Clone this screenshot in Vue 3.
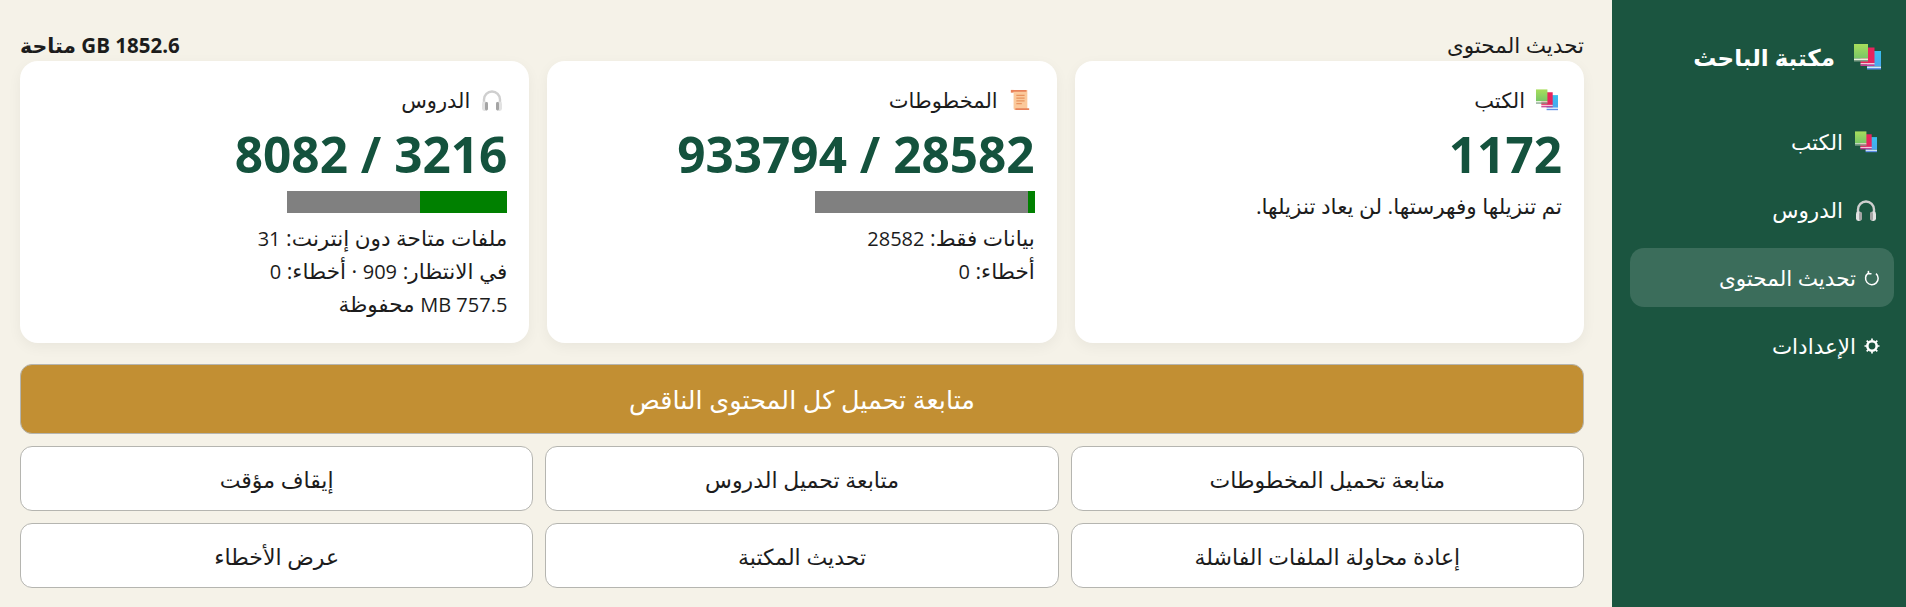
<script setup>
const rows = ['متابعة تحميل المخطوطات', 'متابعة تحميل الدروس', 'إيقاف مؤقت', 'إعادة محاولة الملفات الفاشلة', 'تحديث المكتبة', 'عرض الأخطاء']
</script>

<template>
  <div class="app" dir="rtl">
    <svg class="defs" width="0" height="0">
      <defs>
        <linearGradient id="gr" x1="0" y1="0" x2="0" y2="1"><stop offset="0" stop-color="#a8dd5c" /><stop offset="1" stop-color="#78c766" /></linearGradient>
        <linearGradient id="bl" x1="0" y1="0" x2="0" y2="1"><stop offset="0" stop-color="#38c0ee" /><stop offset="1" stop-color="#4aa5ef" /></linearGradient>
        <g id="books">
          <rect x="13" y="7" width="14" height="15.500" fill="url(#bl)" />
          <rect x="13" y="22.500" width="14" height="1.500" fill="#d8ecfa" />
          <rect x="13" y="24" width="14" height="1.500" fill="#5f8fe8" />
          <rect x="6.500" y="3.500" width="14" height="15.500" fill="#e8245c" />
          <rect x="6.500" y="19" width="14" height="1.500" fill="#f6c8d8" />
          <rect x="6.500" y="20.500" width="14" height="1.500" fill="#c93c92" />
          <rect x="0" y="0" width="14" height="14.500" fill="url(#gr)" />
          <rect x="0" y="14.500" width="14" height="1.500" fill="#e8f2dc" />
          <rect x="0" y="16" width="14" height="1.500" fill="#7f9f88" />
        </g>
        <g id="phones">
          <path d="M3 14V10.500a8 8 0 0 1 16 0V14" fill="none" stroke="#cfcfcf" stroke-width="2.400" />
          <rect x="1" y="12.500" width="5.500" height="9.500" rx="2.400" fill="#e2e2e2" />
          <rect x="15.500" y="12.500" width="5.500" height="9.500" rx="2.400" fill="#e2e2e2" />
          <rect x="4" y="13" width="3" height="8.500" rx="1.400" fill="#a4a4a4" />
          <rect x="15" y="13" width="3" height="8.500" rx="1.400" fill="#a4a4a4" />
        </g>
      </defs>
    </svg>

    <aside class="side">
      <div class="brand">
        <svg class="ico-brand" viewBox="0 0 27 26"><use href="#books" /></svg>
        <span>مكتبة الباحث</span>
      </div>
      <nav class="nav">
        <a class="item emoji">
          <svg class="ico" viewBox="0 0 27 26"><use href="#books" /></svg>
          <span>الكتب</span>
        </a>
        <a class="item emoji">
          <svg class="ico" viewBox="0 0 22 22"><use href="#phones" /></svg>
          <span>الدروس</span>
        </a>
        <a class="item active">
          <svg class="ico-small" viewBox="0 0 16 16"><path d="M12 3.600A6.300 6.300 0 1 1 4.200 3.200M4.300 0.800 4.700 3.600 7.500 3.800" fill="none" stroke="#fff" stroke-width="1.500" /></svg>
          <span>تحديث المحتوى</span>
        </a>
        <a class="item">
          <svg class="ico-small" viewBox="0 0 16 16"><circle cx="8" cy="8" r="4.700" fill="none" stroke="#fff" stroke-width="2.600" /><path d="M8 0.500v2M8 13.500v2M0.500 8h2M13.500 8h2M2.700 2.700l1.500 1.500M13.300 2.700l-1.500 1.500M2.700 13.300l1.500-1.500M13.300 13.300l-1.500-1.500" stroke="#fff" stroke-width="1.700" /></svg>
          <span>الإعدادات</span>
        </a>
      </nav>
    </aside>

    <main class="main">
      <header class="top">
        <span>تحديث المحتوى</span>
        <strong>1852.6 GB متاحة</strong>
      </header>

      <section class="cards">
        <article class="card">
          <div class="label">
            <svg class="ico" viewBox="0 0 27 26"><use href="#books" /></svg>
            <span>الكتب</span>
          </div>
          <div class="num">1172</div>
          <p class="line">تم تنزيلها وفهرستها. لن يعاد تنزيلها.</p>
        </article>

        <article class="card">
          <div class="label">
            <svg class="ico" viewBox="0 0 22 24">
              <path d="M3 1h16v20c0 1 1 2 2 2H6c-1 0-2-1-2-2V3C4 2 3.500 1 3 1z" fill="#fbc99b" />
              <path d="M1 1h3v3H1z" fill="#e8825a" />
              <path d="M3 1h15v2H3zM6 21h15v2H6z" fill="#e8825a" />
              <path d="M7 7h9M7 10h9M7 13h9M7 16h6" stroke="#e8945f" stroke-width="1.200" />
            </svg>
            <span>المخطوطات</span>
          </div>
          <div class="num">28582 / 933794</div>
          <div class="bar"><div class="fill" style="width: 3.06%"></div></div>
          <p class="line">بيانات فقط: <span class="d">28582</span></p>
          <p class="line">أخطاء: <span class="d">0</span></p>
        </article>

        <article class="card">
          <div class="label">
            <svg class="ico" viewBox="0 0 22 22"><use href="#phones" /></svg>
            <span>الدروس</span>
          </div>
          <div class="num">3216 / 8082</div>
          <div class="bar"><div class="fill" style="width: 39.8%"></div></div>
          <p class="line">ملفات متاحة دون إنترنت: <span class="d">31</span></p>
          <p class="line">في الانتظار: <span class="d">909</span> · أخطاء: <span class="d">0</span></p>
          <p class="line"><span class="d">757.5 MB</span> محفوظة</p>
        </article>
      </section>

      <button class="primary">متابعة تحميل كل المحتوى الناقص</button>
      <div class="grid">
        <button v-for="r in rows" :key="r" class="btn">{{ r }}</button>
      </div>
    </main>
  </div>
</template>

<style scoped>
.app {
  display: flex;
  height: 607px;
  overflow: hidden;
  background: #f5f2e8;
  color: #1c1c1c;
  font-family: "Open Sans", "DejaVu Sans", sans-serif;
}
.defs { position: absolute; }
.side {
  flex: 0 0 294px;
  box-sizing: border-box;
  padding: 0 12px 0 18px;
  background: #1b5540;
  color: #fff;
}
.brand {
  display: flex;
  align-items: center;
  gap: 19px;
  height: 58px;
  margin-top: 28px;
  padding-right: 13px;
  font-size: 23px;
  font-weight: 700;
}
.ico-brand { width: 27px; height: 26px; flex: none; }
.nav { display: flex; flex-direction: column; gap: 9px; margin-top: 26px; }
.item {
  display: flex;
  align-items: center;
  gap: 8px;
  height: 59px;
  padding-right: 14px;
  border-radius: 14px;
  font-size: 21.5px;
}
.item.emoji { padding-right: 17px; gap: 12px; }
.item.active { background: rgba(255, 255, 255, 0.14); }
.ico { width: 22px; height: 22px; flex: none; }
.ico-small { width: 16px; height: 16px; flex: none; }
.main {
  flex: 1;
  min-width: 0;
  box-sizing: border-box;
  padding: 28px 28px 18px 20px;
  display: flex;
  flex-direction: column;
}
.top {
  display: flex;
  justify-content: space-between;
  align-items: center;
  height: 33px;
  font-size: 21.5px;
}
.top strong { font-size: 20.5px; font-weight: 700; }
.cards {
  display: grid;
  grid-template-columns: repeat(3, 1fr);
  gap: 18px;
  height: 282px;
}
.card {
  box-sizing: border-box;
  padding: 22px 22px 0;
  background: #fff;
  border-radius: 18px;
  box-shadow: 0 4px 14px rgba(0, 0, 0, 0.05);
}
.label {
  display: flex;
  align-items: center;
  gap: 11px;
  height: 33px;
  padding-right: 4px;
  font-size: 21px;
}
.num {
  margin-top: 7px;
  color: #14523d;
  font-size: 49.5px;
  font-weight: 700;
  line-height: 62px;
}
.num + .line { margin-top: 4px; }
.bar {
  width: 220px;
  height: 22px;
  margin-top: 6px;
  margin-bottom: 8px;
  background: #808080;
}
.fill { height: 100%; background: #008000; }
.line { height: 33px; margin: 0; font-size: 21.5px; line-height: 33px; }
.d { font-size: 20px; line-height: 1; }
.primary {
  display: block;
  height: 70px;
  margin-top: 21px;
  border: 1px solid #b5b5b0;
  border-radius: 12px;
  background: #c28f33;
  color: #fff;
  font: inherit;
  font-size: 25.5px;
}
.grid {
  display: grid;
  grid-template-columns: repeat(3, 1fr);
  gap: 12px;
  margin-top: 12px;
}
.btn {
  height: 65px;
  border: 1px solid #b5b5b0;
  border-radius: 12px;
  background: #fff;
  color: #1c1c1c;
  font: inherit;
  font-size: 22px;
}
</style>
